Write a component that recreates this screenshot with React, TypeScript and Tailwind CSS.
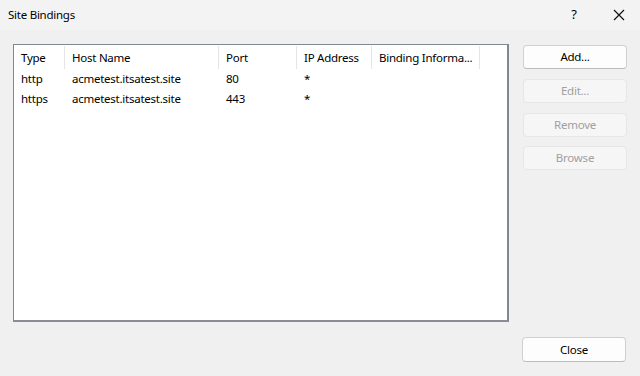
import React from "react";

const cols = [
  { name: "Type", w: "w-[51px]" },
  { name: "Host Name", w: "w-[154px]" },
  { name: "Port", w: "w-[78px]" },
  { name: "IP Address", w: "w-[75px]" },
  { name: "Binding Informa...", w: "w-[108px]" },
];

const rows = [
  ["http", "acmetest.itsatest.site", "80", "*", ""],
  ["https", "acmetest.itsatest.site", "443", "*", ""],
];

function Btn({ label, disabled, extra }: { label: string; disabled?: boolean; extra?: string }) {
  return (
    <div
      className={
        (disabled
          ? "h-[24px] w-[104px] rounded-[4px] border border-[#e6e6e6] bg-[#f6f6f6] text-[#a0a0a0] flex items-center justify-center"
          : "h-[24px] w-[104px] rounded-[4px] border border-[#d0d0d0] border-b-[#bcbcbc] bg-[#fdfdfd] text-[#000] flex items-center justify-center") +
        " " +
        (extra ?? "")
      }
    >
      {label}
    </div>
  );
}

export default function App() {
  return (
    <div
      className="w-[640px] h-[376px] bg-[#f0f0f0] flex flex-col text-[11.5px] tracking-[-0.25px] text-[#000] overflow-hidden"
      style={{ fontFamily: '"Noto Sans", "Open Sans", sans-serif' }}
    >
      <div className="h-[30px] bg-[#f3f3f3] flex items-center pl-[8px] shrink-0">
        <span className="flex-1 text-[#000]">Site Bindings</span>
        <span className="w-[10px] text-center mr-[34px] text-[13px]">?</span>
        <svg width="12" height="12" viewBox="0 0 12 12" className="mr-[15px]">
          <path d="M1 1 L11 11 M11 1 L1 11" stroke="#111" strokeWidth="1.2" />
        </svg>
      </div>
      <div className="flex pl-[13px] pt-[14px]">
        <div className="w-[496px] h-[278px] border border-[#828790] border-r-[2px] border-b-[2px] border-b-[#8a8d94] bg-white flex flex-col">
          <div className="flex h-[24px] items-center pt-[1px]">
            {cols.map((c, i) => (
              <div
                key={i}
                className={`${c.w} h-[23px] flex items-center pl-[7px] border-r border-[#e5e5e5] whitespace-nowrap overflow-hidden`}
              >
                {c.name}
              </div>
            ))}
          </div>
          {rows.map((r, ri) => (
            <div key={ri} className="flex h-[20px] items-center">
              {r.map((cell, ci) => (
                <div
                  key={ci}
                  className={`${cols[ci].w} pl-[7px] whitespace-nowrap overflow-hidden`}
                >
                  {cell}
                </div>
              ))}
            </div>
          ))}
        </div>
        <div className="flex flex-col ml-[14px] pt-[1px]">
          <Btn label="Add..." />
          <Btn label="Edit..." disabled extra="mt-[10px]" />
          <Btn label="Remove" disabled extra="mt-[10px]" />
          <Btn label="Browse" disabled extra="mt-[9px]" />
        </div>
      </div>
      <div className="flex justify-end pr-[14px] pt-[15px]">
        <div className="h-[25px] w-[104px] rounded-[4px] border border-[#d0d0d0] border-b-[#bcbcbc] bg-[#fdfdfd] text-[#000] flex items-center justify-center">
          Close
        </div>
      </div>
    </div>
  );
}
